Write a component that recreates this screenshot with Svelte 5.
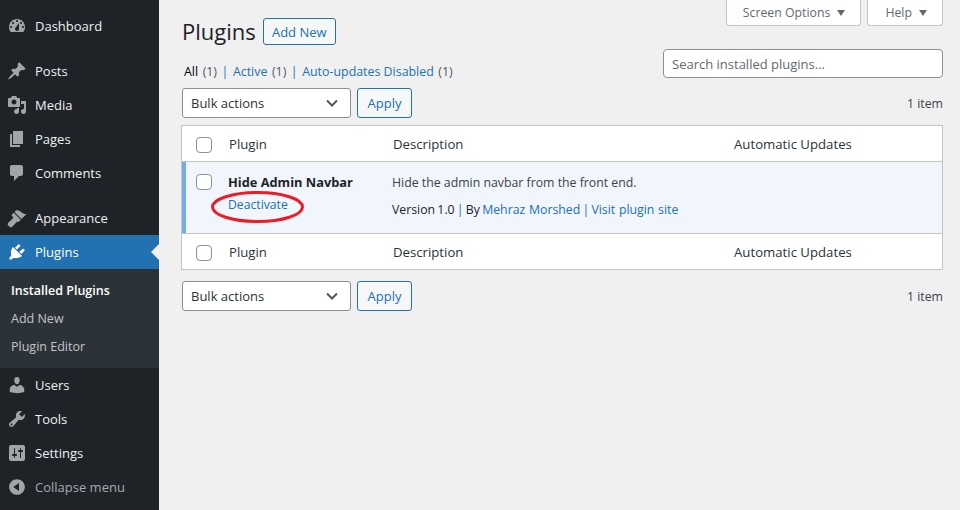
<script>
  const iconPaths = {
    dashboard: "M3.76 16h12.48c1.1-1.37 1.76-3.11 1.76-5 0-4.42-3.58-8-8-8s-8 3.58-8 8c0 1.89.66 3.63 1.76 5zM10 4c.55 0 1 .45 1 1s-.45 1-1 1-1-.45-1-1 .45-1 1-1zM6 6c.55 0 1 .45 1 1s-.45 1-1 1-1-.45-1-1 .45-1 1-1zm8 0c.55 0 1 .45 1 1s-.45 1-1 1-1-.45-1-1 .45-1 1-1zm-5.37 5.55L12 7v6c0 1.1-.9 2-2 2s-2-.9-2-2c0-.57.24-1.08.63-1.45zM4 10c.55 0 1 .45 1 1s-.45 1-1 1-1-.45-1-1 .45-1 1-1zm12 0c.55 0 1 .45 1 1s-.45 1-1 1-1-.45-1-1 .45-1 1-1z",
    posts: "M10.44 3.02l1.82-1.82 6.36 6.35-1.83 1.82c-1.05-.68-2.48-.57-3.41.36l-.75.75c-.92.93-1.04 2.35-.35 3.41l-1.83 1.82-2.41-2.41-2.8 2.79c-.42.42-3.38 2.71-3.8 2.29s1.86-3.39 2.28-3.81l2.79-2.79L4.1 9.36l1.83-1.82c1.05.69 2.48.57 3.4-.36l.75-.75c.93-.92 1.05-2.35.36-3.41z",
    media: "M13 11V4c0-.55-.45-1-1-1h-1.67L9 1H5L3.67 3H2c-.55 0-1 .45-1 1v7c0 .55.45 1 1 1h10c.55 0 1-.45 1-1zM7 4.5c1.38 0 2.5 1.12 2.5 2.5S8.38 9.5 7 9.5 4.5 8.38 4.5 7 5.62 4.5 7 4.5zM14 6h5v10.5c0 1.38-1.12 2.5-2.5 2.5S14 17.88 14 16.5s1.12-2.5 2.5-2.5c.17 0 .34.02.5.05V9h-3V6zm-4 8.05V13h2v3.5c0 1.38-1.12 2.5-2.5 2.5S7 17.88 7 16.5 8.12 14 9.5 14c.17 0 .34.02.5.05z",
    pages: "M6 15V2h10v13H6zm-1 1h8v2H3V5h2v11z",
    comments: "M5 2h9c1.1 0 2 .9 2 2v7c0 1.1-.9 2-2 2h-2l-5 5v-5H5c-1.1 0-2-.9-2-2V4c0-1.1.9-2 2-2z",
    appearance: "M14.48 11.06L7.41 3.99l1.5-1.5c.5-.56 2.3-.47 3.51.32 1.21.8 1.43 1.28 2.91 2.1 1.18.64 2.45 1.26 4.45.85zM13.77 11.77L6.7 4.7 4.93 6.47c-.39.39-.39 1.02 0 1.41l1.06 1.06c.39.39.39 1.03 0 1.42L1.3 14.7c-.8.8-.8 2 0 2.8l1.2 1.2c.8.8 2 .8 2.8 0L9.7 14c.39-.39 1.03-.39 1.42 0L12 13.54z",
    plugins: "M13.11 4.36L9.87 7.6 8 5.73l3.24-3.24c.35-.34 1.05-.2 1.56.32.52.51.66 1.21.31 1.55zm-8 1.77l.91-1.12 9.01 9.01-1.19.84c-.71.71-2.63 1.16-3.82 1.16H6.14L4.9 17.26c-.59.59-1.54.59-2.12 0-.59-.58-.59-1.53 0-2.12l1.24-1.24v-3.88c0-1.13.4-3.19 1.09-3.89zm7.26 3.97l3.24-3.24c.34-.35 1.04-.21 1.55.31.52.51.66 1.21.31 1.55l-3.24 3.25z",
    users: "M10 9.25c-2.27 0-2.73-3.44-2.73-3.44C7 4.02 7.82 2 9.97 2c2.16 0 2.98 2.02 2.71 3.81 0 0-.41 3.44-2.68 3.44zm0 2.57L12.72 10c2.39 0 4.52 2.33 4.52 4.53v2.49s-3.65 1.13-7.24 1.13c-3.65 0-7.24-1.13-7.24-1.13v-2.49c0-2.25 1.94-4.48 4.47-4.48z",
    tools: "M16.68 9.77c-1.34 1.34-3.3 1.67-4.95.99l-5.41 6.52c-.99.99-2.59.99-3.58 0s-.99-2.59 0-3.57l6.52-5.42c-.68-1.65-.35-3.61.99-4.95 1.28-1.28 3.12-1.62 4.72-1.06l-2.89 2.89 2.82 2.82 2.86-2.87c.53 1.58.18 3.39-1.08 4.65zM3.81 16.21c.4.39 1.04.39 1.43 0 .4-.4.4-1.04 0-1.43-.39-.4-1.03-.4-1.43 0-.39.39-.39 1.03 0 1.43z",
    settings: "M18 16V4c0-1.1-.9-2-2-2H4c-1.1 0-2 .9-2 2v12c0 1.1.9 2 2 2h12c1.1 0 2-.9 2-2zM8 11h1c.55 0 1 .45 1 1s-.45 1-1 1H8v1.5c0 .28-.22.5-.5.5s-.5-.22-.5-.5V13H6c-.55 0-1-.45-1-1s.45-1 1-1h1V5.5c0-.28.22-.5.5-.5s.5.22.5.5V11zm5-2h-1c-.55 0-1-.45-1-1s.45-1 1-1h1V5.5c0-.28.22-.5.5-.5s.5.22.5.5V7h1c.55 0 1 .45 1 1s-.45 1-1 1h-1v5.5c0 .28-.22.5-.5.5s-.5-.22-.5-.5V9z",
    collapse: "M10 2.16c4.33 0 7.84 3.51 7.84 7.84s-3.51 7.84-7.84 7.84S2.16 14.33 2.16 10 5.67 2.16 10 2.16zm2 11.72V6.12L6.18 9.97z"
  };

  const topMenu = [
    [{ id: "dashboard", label: "Dashboard" }],
    [
      { id: "posts", label: "Posts" },
      { id: "media", label: "Media" },
      { id: "pages", label: "Pages" },
      { id: "comments", label: "Comments" }
    ]
  ];
  const bottomMenu = [
    { id: "users", label: "Users" },
    { id: "tools", label: "Tools" },
    { id: "settings", label: "Settings" }
  ];
</script>

{#snippet icon(id)}
  <svg class="menu-icon" viewBox="0 0 20 20" width="20" height="20"><path fill-rule="evenodd" d={iconPaths[id]} /></svg>
{/snippet}

{#snippet bulkBar()}
  <div class="bulk">
    <div class="select">
      <span>Bulk actions</span>
      <svg viewBox="0 0 16 16" width="16" height="16"><path d="M3 5.5l5 5 5-5" fill="none" stroke="#50575e" stroke-width="2" /></svg>
    </div>
    <button class="btn">Apply</button>
  </div>
  <span class="count">1 item</span>
{/snippet}

<div class="page">
  <nav class="sidebar">
    {#each topMenu as group}
      <ul class="group">
        {#each group as item}
          <li class="item">{@render icon(item.id)}<span>{item.label}</span></li>
        {/each}
      </ul>
    {/each}
    <ul class="group last">
      <li class="item">{@render icon("appearance")}<span>Appearance</span></li>
      <li class="item current">{@render icon("plugins")}<span>Plugins</span></li>
    </ul>
    <ul class="submenu">
      <li class="on">Installed Plugins</li>
      <li>Add New</li>
      <li>Plugin Editor</li>
    </ul>
    <ul class="after">
      {#each bottomMenu as item}
        <li class="item">{@render icon(item.id)}<span>{item.label}</span></li>
      {/each}
      <li class="item collapse">{@render icon("collapse")}<span>Collapse menu</span></li>
    </ul>
  </nav>

  <main class="main">
    <header class="top">
      <div class="top-left">
        <div class="title-row">
          <h1>Plugins</h1>
          <button class="btn add">Add New</button>
        </div>
        <p class="filters">
          <b>All</b> <em>(1)</em> <i>|</i> <a href="#active">Active</a> <em>(1)</em> <i>|</i> <a href="#auto">Auto-updates Disabled</a> <em>(1)</em>
        </p>
      </div>
      <div class="top-right">
        <div class="tabs">
          <div class="tab">Screen Options<span class="caret"></span></div>
          <div class="tab">Help<span class="caret"></span></div>
        </div>
        <div class="search">Search installed plugins...</div>
      </div>
    </header>

    <div class="tablenav first">{@render bulkBar()}</div>

    <table>
      <colgroup>
        <col class="c-check" />
        <col class="c-plugin" />
        <col class="c-desc" />
        <col />
      </colgroup>
      <thead>
        <tr>
          <th><span class="checkbox"></span></th>
          <th>Plugin</th>
          <th>Description</th>
          <th>Automatic Updates</th>
        </tr>
      </thead>
      <tbody>
        <tr class="active">
          <td class="check"><span class="checkbox"></span></td>
          <td class="name">
            <strong>Hide Admin Navbar</strong>
            <a href="#deactivate">Deactivate</a>
            <svg class="circle" viewBox="0 0 93 32" width="93" height="32"><ellipse cx="46.5" cy="16" rx="45" ry="14.5" fill="none" stroke="#ed1c24" stroke-width="3" /></svg>
          </td>
          <td class="desc">
            <p>Hide the admin navbar from the front end.</p>
            <p class="meta">Version 1.0 <i>|</i> By <a href="#author">Mehraz Morshed</a> <i>|</i> <a href="#site">Visit plugin site</a></p>
          </td>
          <td></td>
        </tr>
      </tbody>
      <tfoot>
        <tr>
          <th><span class="checkbox"></span></th>
          <th>Plugin</th>
          <th>Description</th>
          <th>Automatic Updates</th>
        </tr>
      </tfoot>
    </table>

    <div class="tablenav second">{@render bulkBar()}</div>
  </main>
</div>

<style>
  :global(body) {
    margin: 0;
    background: #f0f0f1;
    overflow: hidden;
  }

  .page {
    display: flex;
    height: 510px;
    font-family: "Open Sans", "Noto Sans", sans-serif;
    font-size: 13px;
    color: #3c434a;
  }

  ul {
    list-style: none;
    margin: 0;
    padding: 0;
  }

  /* sidebar */
  .sidebar {
    width: 159px;
    flex: none;
    background: #1d2327;
    padding-top: 9px;
    box-sizing: border-box;
  }

  .group {
    margin-bottom: 11px;
  }

  .group.last {
    margin-bottom: 0;
  }

  .item {
    display: flex;
    align-items: center;
    gap: 8px;
    height: 34px;
    padding-left: 7px;
    color: #f0f0f1;
    position: relative;
  }

  .menu-icon {
    fill: #a0a5aa;
    flex: none;
  }

  .current {
    background: #2271b1;
    color: #fff;
  }

  .current .menu-icon {
    fill: #fff;
  }

  .current::after {
    content: "";
    position: absolute;
    right: 0;
    top: 9px;
    border: 8px solid transparent;
    border-right-color: #f0f0f1;
    border-left: 0;
  }

  .submenu {
    background: #2c3338;
    padding: 8px 0 6px;
    height: 99px;
    box-sizing: border-box;
    font-size: 12.5px;
    color: #c3c4c7;
  }

  .submenu li {
    height: 28px;
    line-height: 28px;
    padding-left: 11px;
  }

  .submenu .on {
    color: #fff;
    font-weight: 600;
  }

  .collapse {
    color: #a7aaad;
  }

  /* main */
  .main {
    flex: 1;
    padding: 0 17px 0 23px;
    min-width: 0;
  }

  .top {
    display: flex;
    justify-content: space-between;
    height: 88px;
  }

  .top-left {
    padding-top: 18px;
  }

  .title-row {
    display: flex;
    align-items: center;
    gap: 7px;
  }

  h1 {
    margin: 0;
    font-size: 22px;
    font-weight: 400;
    line-height: 27px;
    color: #1d2327;
  }

  .btn {
    font: inherit;
    height: 30px;
    padding: 0 10px;
    background: #f6f7f7;
    border: 1px solid #2271b1;
    border-radius: 3px;
    color: #2271b1;
  }

  .add {
    height: 27px;
    width: 73px;
    padding: 0;
  }

  .filters {
    margin: 18px 0 0;
    padding-left: 2px;
    line-height: 18px;
    font-size: 12.4px;
    word-spacing: 1.3px;
    color: #50575e;
  }

  .filters a {
    word-spacing: 0;
  }

  .filters b {
    font-weight: 400;
    color: #000;
  }

  .filters em {
    font-style: normal;
  }

  i {
    font-style: normal;
    color: #2271b1;
  }

  a {
    color: #2271b1;
    text-decoration: none;
  }

  .top-right {
    display: flex;
    flex-direction: column;
    align-items: flex-end;
    gap: 23px;
  }

  .tabs {
    display: flex;
    gap: 6px;
  }

  .tab {
    display: flex;
    align-items: center;
    justify-content: center;
    height: 26px;
    box-sizing: border-box;
    padding: 0 15px 0 16px;
    background: #fff;
    border: 1px solid #c3c4c7;
    border-top: 0;
    border-radius: 0 0 4px 4px;
    font-size: 12.3px;
    color: #646970;
    gap: 7px;
  }

  .tab:last-child {
    padding-left: 17px;
  }

  .caret {
    border: 4.5px solid transparent;
    border-top: 6px solid #646970;
    border-bottom: 0;
  }

  .search {
    width: 280px;
    height: 29px;
    box-sizing: border-box;
    padding-left: 8px;
    line-height: 28px;
    background: #fff;
    border: 1px solid #8c8f94;
    border-radius: 4px;
    color: #646970;
  }

  .tablenav {
    display: flex;
    justify-content: space-between;
    align-items: center;
    height: 30px;
  }

  .first {
    margin-bottom: 7px;
  }

  .second {
    margin-top: 11px;
  }

  .bulk {
    display: flex;
    gap: 6px;
  }

  .select {
    display: flex;
    align-items: center;
    justify-content: space-between;
    width: 169px;
    height: 30px;
    box-sizing: border-box;
    padding: 0 10px 0 8px;
    background: #fff;
    border: 1px solid #8c8f94;
    border-radius: 3px;
    color: #2c3338;
  }

  .bulk .btn {
    width: 55px;
    padding: 0;
  }

  .count {
    color: #3c434a;
    font-size: 12.3px;
  }

  /* table */
  table {
    width: 762px;
    margin-left: -1px;
    table-layout: fixed;
    border-collapse: separate;
    border-spacing: 0;
    background: #fff;
    border: 1px solid #c3c4c7;
  }

  .c-check {
    width: 39px;
  }

  .c-plugin {
    width: 164px;
  }

  .c-desc {
    width: 341px;
  }

  th {
    height: 35px;
    padding: 0 8px;
    text-align: left;
    font-weight: 400;
    font-size: 13.2px;
    color: #2c3338;
  }

  th:first-child {
    padding: 3px 0 0 14px;
    box-sizing: border-box;
  }

  thead th {
    border-bottom: 1px solid #c3c4c7;
  }

  tfoot th {
    border-top: 1px solid #c3c4c7;
  }

  .checkbox {
    display: block;
    width: 16px;
    height: 16px;
    box-sizing: border-box;
    background: #fff;
    border: 1px solid #8c8f94;
    border-radius: 4px;
  }

  .active td {
    height: 71px;
    box-sizing: border-box;
    padding: 0 7px;
    background: #f0f6fc;
    vertical-align: top;
  }

  .active .check {
    padding: 12px 0 0 10px;
    border-left: 4px solid #72aee6;
  }

  .name {
    position: relative;
  }

  .name strong {
    display: block;
    margin-top: 11px;
    font-size: 12.8px;
    font-weight: 700;
    line-height: 18px;
    color: #1d2327;
  }

  .name a {
    display: block;
    margin-top: 5px;
    line-height: 18px;
    font-size: 12.2px;
  }

  .circle {
    position: absolute;
    left: -10px;
    top: 29px;
  }

  .desc p {
    margin: 12px 0 0;
    line-height: 18px;
    font-size: 12.3px;
  }

  .desc .meta {
    margin-top: 9px;
    word-spacing: -1px;
    color: #1d2327;
  }

  .desc .meta a {
    word-spacing: 0.5px;
  }
</style>
